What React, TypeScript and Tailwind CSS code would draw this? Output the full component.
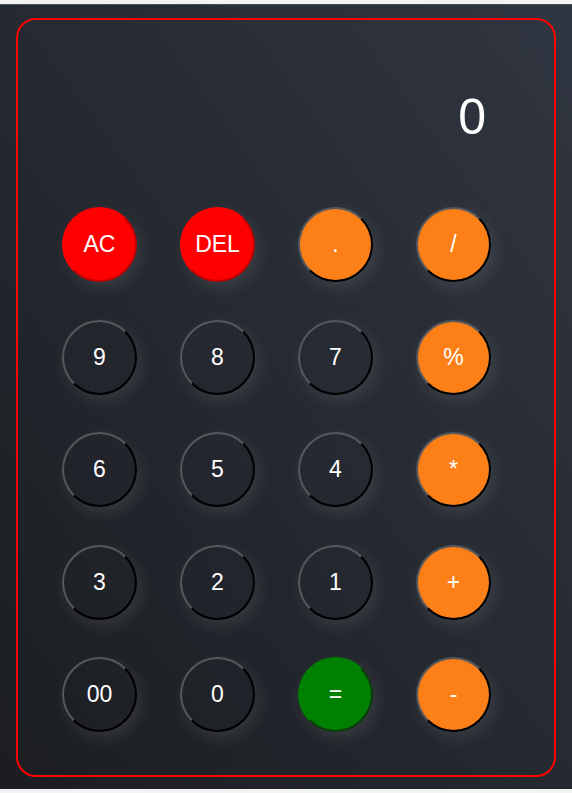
const keys = [
  { label: "AC", kind: "red" },
  { label: "DEL", kind: "red" },
  { label: ".", kind: "orange" },
  { label: "/", kind: "orange" },
  { label: "9", kind: "dark" },
  { label: "8", kind: "dark" },
  { label: "7", kind: "dark" },
  { label: "%", kind: "orange" },
  { label: "6", kind: "dark" },
  { label: "5", kind: "dark" },
  { label: "4", kind: "dark" },
  { label: "*", kind: "orange" },
  { label: "3", kind: "dark" },
  { label: "2", kind: "dark" },
  { label: "1", kind: "dark" },
  { label: "+", kind: "orange" },
  { label: "00", kind: "dark" },
  { label: "0", kind: "dark" },
  { label: "=", kind: "green" },
  { label: "-", kind: "orange" },
];

const styles: Record<string, string> = {
  dark: "bg-transparent border-t-[#55585d] border-l-[#55585d] border-r-black border-b-black",
  orange: "bg-[#fd7f18] border-t-[#55585d] border-l-[#55585d] border-r-black border-b-black",
  red: "bg-[#ff0000] border-t-[#ff0000] border-l-[#ff0000] border-r-[#c40000] border-b-[#c40000]",
  green: "bg-[#008000] border-t-[#008000] border-l-[#008000] border-r-[#0b3d0b] border-b-[#0b3d0b]",
};

export default function App() {
  return (
    <div className="bg-[#f3f3f3] pt-[4px] pb-[4px] font-['Liberation_Sans',Arial,sans-serif]">
      <div className="h-[785px] border-t border-[#4a4d52] bg-linear-to-tr from-[#1b1d21] to-[#303641] pt-[13px] pl-[16px]">
        <div className="w-[540px] h-[759px] border-2 border-[#ff0000] rounded-[20px]">
          <div className="pt-[72px] pr-[68px] flex justify-end">
            <div className="text-white text-[50px] leading-none">0</div>
          </div>
          <div className="mt-[65px] pl-[44px] grid grid-cols-[repeat(4,75px)] gap-x-[43px] gap-y-[37.5px]">
            {keys.map(({ label, kind }) => (
              <button
                key={label}
                className={`w-[75px] h-[75px] rounded-full border-2 flex items-center justify-center text-white text-[23px] shadow-[4px_6px_16px_rgba(255,255,255,0.1)] ${styles[kind]}`}
              >
                {label}
              </button>
            ))}
          </div>
        </div>
      </div>
    </div>
  );
}
